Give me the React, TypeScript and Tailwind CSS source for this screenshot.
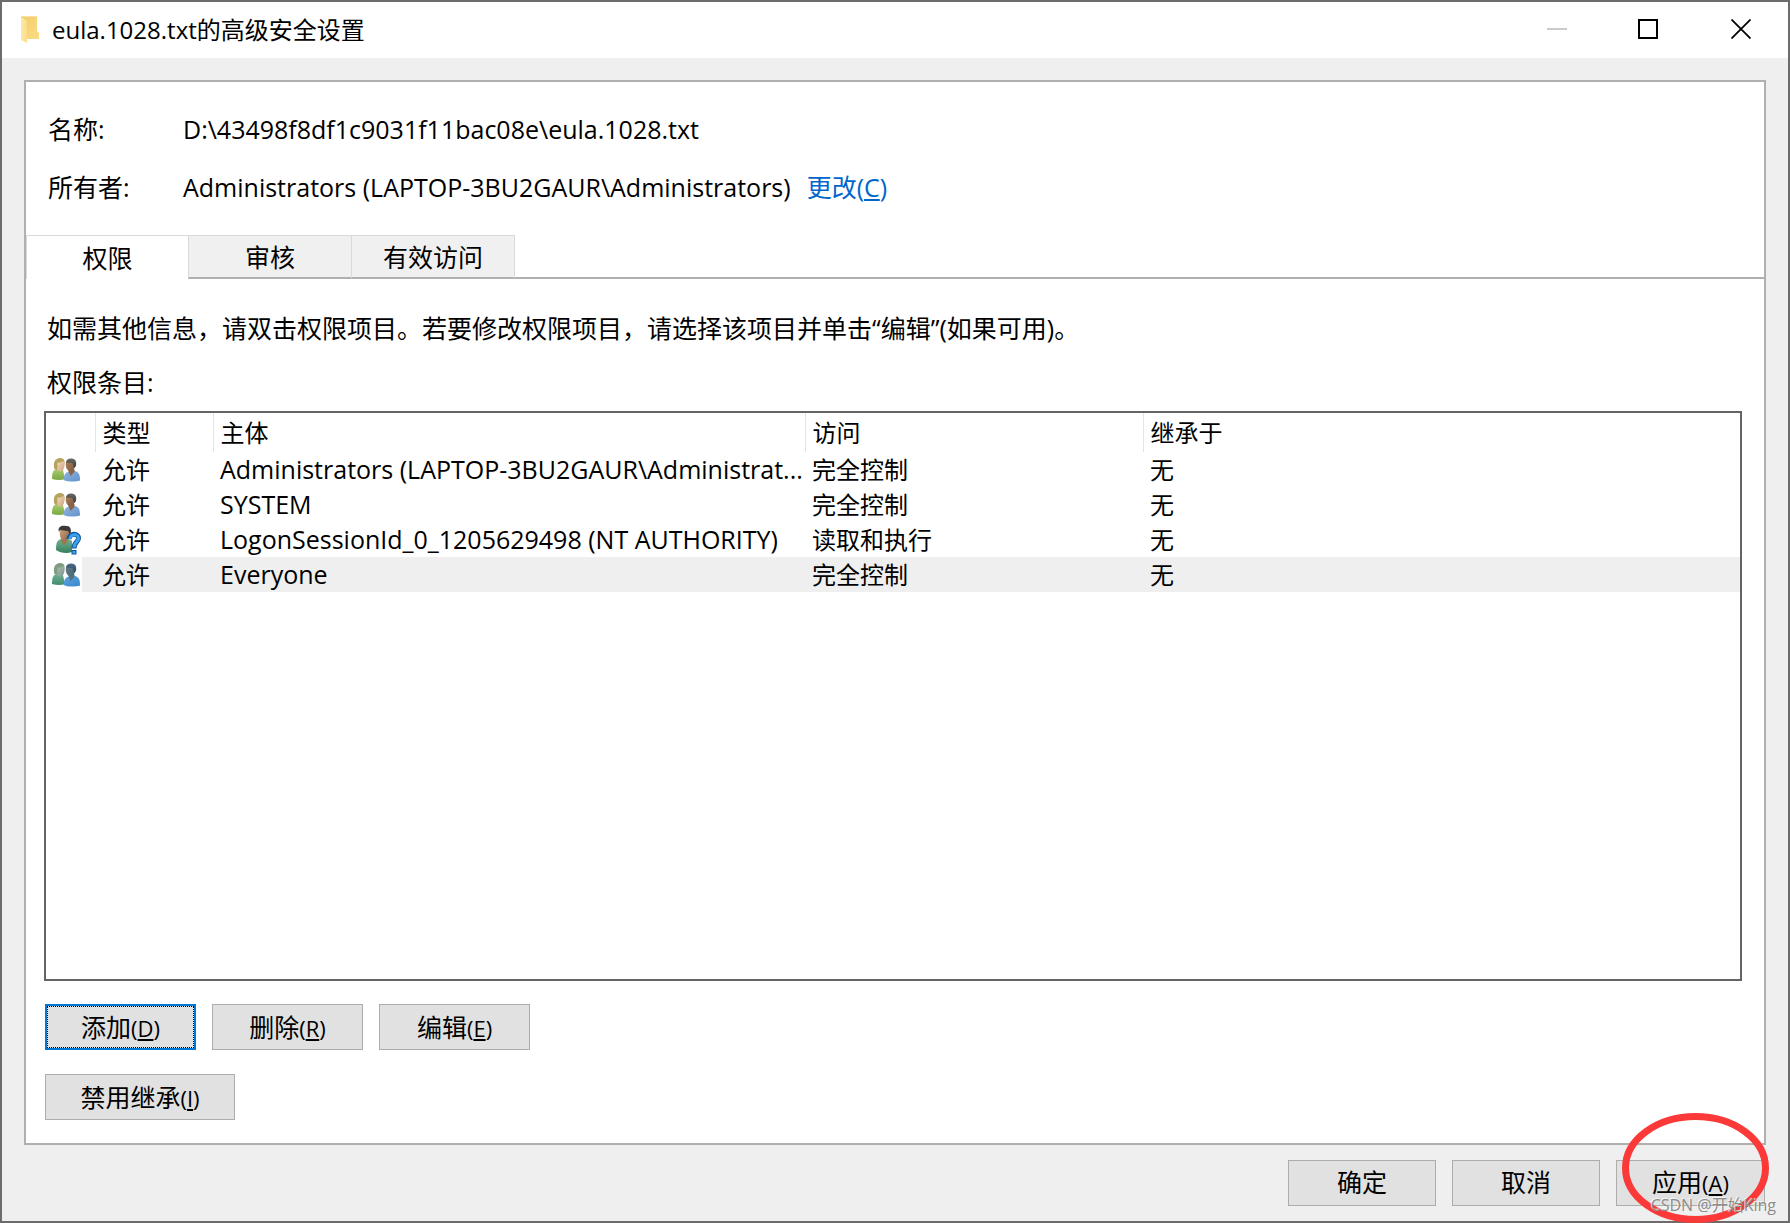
import { useState } from 'react';
import clsx from 'clsx';

type IconKind = 'group' | 'unknown' | 'selected';

const entries: { icon: IconKind; type: string; principal: string; access: string; inherited: string }[] = [
  { icon: 'group', type: '允许', principal: 'Administrators (LAPTOP-3BU2GAUR\\Administrat...', access: '完全控制', inherited: '无' },
  { icon: 'group', type: '允许', principal: 'SYSTEM', access: '完全控制', inherited: '无' },
  { icon: 'unknown', type: '允许', principal: 'LogonSessionId_0_1205629498 (NT AUTHORITY)', access: '读取和执行', inherited: '无' },
  { icon: 'selected', type: '允许', principal: 'Everyone', access: '完全控制', inherited: '无' },
];

const tabs = ['权限', '审核', '有效访问'];

function FolderIcon() {
  return (
    <svg width="19" height="28" viewBox="0 0 19 28" aria-hidden="true">
      <defs>
        <linearGradient id="folder-back" x1="0" y1="0" x2="1" y2="1">
          <stop offset="0" stopColor="#f0cd6c" />
          <stop offset="1" stopColor="#fbdc84" />
        </linearGradient>
        <linearGradient id="folder-front" x1="0" y1="0" x2="1" y2="0">
          <stop offset="0" stopColor="#fde9a9" />
          <stop offset="1" stopColor="#fbdd86" />
        </linearGradient>
      </defs>
      <path d="M0 0H16V15L18 17V23H5L0 20Z" fill="url(#folder-back)" />
      <path d="M0 1L5 4L6 6V27L0 24Z" fill="url(#folder-front)" />
      <path d="M0 0.500H16" stroke="#f9e4a2" />
    </svg>
  );
}

function GroupIcon({ selected = false }: { selected?: boolean }) {
  const id = selected ? 'sel' : 'grp';
  return (
    <svg width="28" height="24" viewBox="0 0 28 24" aria-hidden="true">
      <defs>
        <linearGradient id={`${id}-left`} x1="0" y1="0" x2="0" y2="1">
          <stop offset="0" stopColor={selected ? '#6fae90' : '#a9cb6e'} />
          <stop offset="1" stopColor={selected ? '#438c72' : '#7ba845'} />
        </linearGradient>
        <linearGradient id={`${id}-right`} x1="0" y1="0" x2="1" y2="1">
          <stop offset="0" stopColor={selected ? '#5aa3e0' : '#8db5e0'} />
          <stop offset="1" stopColor={selected ? '#3c86cd' : '#6493cb'} />
        </linearGradient>
        <linearGradient id={`${id}-face`} x1="0" y1="0" x2="1" y2="1">
          <stop offset="0" stopColor={selected ? '#a9b9a9' : '#f3d8ba'} />
          <stop offset="1" stopColor={selected ? '#7d9995' : '#cda280'} />
        </linearGradient>
        <linearGradient id={`${id}-face2`} x1="0" y1="0" x2="1" y2="1">
          <stop offset="0" stopColor={selected ? '#6b7c7f' : '#a98260'} />
          <stop offset="1" stopColor={selected ? '#45677d' : '#7d573e'} />
        </linearGradient>
        <linearGradient id={`${id}-hair`} x1="0" y1="0" x2="0" y2="1">
          <stop offset="0" stopColor={selected ? '#4c6b85' : '#6a6866'} />
          <stop offset="1" stopColor={selected ? '#2c4a66' : '#3c3a39'} />
        </linearGradient>
      </defs>
      {/* left person */}
      <path d="M0 21C0 15 1 12 4 11.500L11 12L13 21C9 22.500 4 22 0 21Z" fill={`url(#${id}-left)`} />
      <path d="M2 9C1.500 4 3 0.500 8 0C11.500 0 13 2 12.500 6L11 9L5 12C3 12 2 11 2 9Z" fill={selected ? '#7f9c80' : '#b7a45c'} />
      <path d="M5.500 4.500C8 5 10 4 11.500 3C13 6 13 10 10.500 12.500L8 14L5 11.500C6 9 5 7 5.500 4.500Z" fill={`url(#${id}-face)`} />
      {/* right person */}
      <path d="M11.500 22C12 17 13 14.500 17 13.500L23 13C27 14 28 17 28 22.500C23 24 16 24 11.500 22Z" fill={`url(#${id}-right)`} />
      <path d="M16 12L18 11H22.500V14L18.500 18Z" fill={selected ? '#52727f' : '#8e6446'} />
      <path d="M14 4C15 2 22 1 23 5C24 9 21 13 18.500 13C15 13 13 9 14 4Z" fill={`url(#${id}-face2)`} />
      <path d="M14 4.500C14 0 21 -0.500 23.500 2.500C25 5 24 9 22.500 10C21 8 21.500 6 20 5Z" fill={`url(#${id}-hair)`} />
    </svg>
  );
}

function UnknownIcon() {
  return (
    <svg width="30" height="30" viewBox="0 0 30 30" className="shrink-0" aria-hidden="true">
      <defs>
        <linearGradient id="unk-body" x1="0" y1="0" x2="0" y2="1">
          <stop offset="0" stopColor="#72b090" />
          <stop offset="1" stopColor="#37805f" />
        </linearGradient>
        <linearGradient id="unk-face" x1="0" y1="0" x2="1" y2="1">
          <stop offset="0" stopColor="#c9a585" />
          <stop offset="1" stopColor="#8f6242" />
        </linearGradient>
      </defs>
      <path d="M4 25C4 18 5 15 9 14H17L20 16V27C15 29 8 28 4 25Z" fill="url(#unk-body)" />
      <path d="M9 13H16L15 17L12 20L9 16Z" fill="#a37350" />
      <path d="M8 6C9 3 17 3 17 7C18 12 15 16 12 16C9 15 7 11 8 6Z" fill="url(#unk-face)" />
      <path d="M7 7C5 1 11 0 14 1C19 0 20 6 18 10L16 6C13 6 10 5 8 5Z" fill="#3b3a38" />
      <path d="M17 14C17.500 7.500 27 8 26.500 13.500C26 17.500 22 17 22 23.500" fill="none" stroke="#11569f" strokeWidth="5" />
      <path d="M18 14C18.500 8.500 26.500 8.500 26.500 13.500C26 17.500 22 17 22 22.500" fill="none" stroke="#39a2ea" strokeWidth="3" />
      <rect x="20" y="25.500" width="4" height="3.500" fill="#39a2ea" stroke="#11569f" />
    </svg>
  );
}

function EntryIcon({ kind }: { kind: IconKind }) {
  if (kind === 'unknown') return <UnknownIcon />;
  return <GroupIcon selected={kind === 'selected'} />;
}

function DialogButton({ label, hotkey, className }: { label: string; hotkey?: string; className?: string }) {
  return (
    <button
      type="button"
      className={clsx('h-[46px] border bg-[#e1e1e1] text-center text-[25px] whitespace-nowrap', className)}
    >
      {label}
      {hotkey && <span className="text-[22px]">(<u className="underline-offset-2">{hotkey}</u>)</span>}
    </button>
  );
}

function TitleBar() {
  return (
    <header className="flex h-14 shrink-0 items-center bg-white pl-[19px]">
      <FolderIcon />
      <h1 className="ml-3 flex-1 text-2xl">eula.1028.txt的高级安全设置</h1>
      <div className="flex h-full pb-0.5">
        <button type="button" aria-label="最小化" disabled className="flex w-[91px] items-center justify-center">
          <svg width="20" height="2"><rect width="20" height="2" fill="#cacaca" /></svg>
        </button>
        <button type="button" aria-label="最大化" className="flex w-[92px] items-center justify-center">
          <svg width="20" height="20"><rect x="1" y="1" width="18" height="18" fill="none" stroke="#000" strokeWidth="2" /></svg>
        </button>
        <button type="button" aria-label="关闭" className="flex w-[94px] items-center justify-center">
          <svg width="20" height="20"><path d="M0.500 0.500L19.500 19.500M19.500 0.500L0.500 19.500" stroke="#000" strokeWidth="1.800" /></svg>
        </button>
      </div>
    </header>
  );
}

function EntriesTable() {
  return (
    <div className="flex-1 border-2 border-[#646464] bg-white">
      <table className="w-full table-fixed text-left text-2xl">
        <colgroup>
          <col className="w-[49px]" />
          <col className="w-[118px]" />
          <col className="w-[592px]" />
          <col className="w-[338px]" />
          <col />
        </colgroup>
        <thead>
          <tr className="h-[39px]">
            <th className="border-r border-[#e3e3e3]" aria-label="图标" />
            <th className="border-r border-[#e3e3e3] pl-[7px] font-normal">类型</th>
            <th className="border-r border-[#e3e3e3] pl-[7px] font-normal">主体</th>
            <th className="border-r border-[#e3e3e3] pl-[7px] font-normal">访问</th>
            <th className="pl-[7px] font-normal">继承于</th>
          </tr>
        </thead>
        <tbody>
          {entries.map((entry) => (
            <tr key={entry.principal} className={clsx('h-[35px] leading-[35px]', entry.icon === 'selected' && 'bg-[#efefef]')}>
              <td className="p-0">
                <div className="flex h-[35px] w-9 items-center bg-white pl-1.5">
                  <EntryIcon kind={entry.icon} />
                </div>
              </td>
              <td className="pl-[7px]">{entry.type}</td>
              <td className="pl-[7px] text-[25px] whitespace-nowrap">{entry.principal}</td>
              <td className="pl-[7px]">{entry.access}</td>
              <td className="pl-[7px]">{entry.inherited}</td>
            </tr>
          ))}
        </tbody>
      </table>
    </div>
  );
}

export default function App() {
  const [activeTab, setActiveTab] = useState(tabs[0]);

  return (
    <main className="relative flex min-h-screen flex-col border-2 border-[#6c6c6c] bg-[#efefef] font-['Open_Sans','Noto_Sans_CJK_SC',sans-serif] font-normal text-black">
      <TitleBar />

      <section className="mx-[22px] mt-[22px] flex flex-1 flex-col border-2 border-[#b0b0b0] bg-white">
        <dl className="pt-[19px] pb-[18px] pl-[22px] text-[25px]">
          <div className="flex h-[58px] items-center">
            <dt className="w-[135px]">名称:</dt>
            <dd>D:\43498f8df1c9031f11bac08e\eula.1028.txt</dd>
          </div>
          <div className="flex h-[58px] items-center">
            <dt className="w-[135px]">所有者:</dt>
            <dd>Administrators (LAPTOP-3BU2GAUR\Administrators)</dd>
            <dd className="ml-4">
              <a href="#change" className="text-[#0066cc]">更改(<u className="underline-offset-2">C</u>)</a>
            </dd>
          </div>
        </dl>

        <div role="tablist" className="flex h-11 text-[25px]">
          {tabs.map((tab) => (
            <button
              key={tab}
              type="button"
              role="tab"
              aria-selected={tab === activeTab}
              onClick={() => setActiveTab(tab)}
              className={clsx(
                'w-[163px] border-t border-l border-t-[#d9d9d9] border-l-[#d9d9d9] pt-0.5 first:w-[162px]',
                tab === activeTab ? 'bg-white' : 'border-b-2 border-b-[#b0b0b0] bg-[#f0f0f0]',
              )}
            >
              {tab}
            </button>
          ))}
          <div className="flex-1 border-b-2 border-l border-b-[#b0b0b0] border-l-[#d9d9d9]" />
        </div>

        <div role="tabpanel" className="flex flex-1 flex-col pt-[31px] pr-[22px] pb-[23px] pl-[18px] text-[25px] leading-9">
          <p className="pl-[3px]">如需其他信息，请双击权限项目。若要修改权限项目，请选择该项目并单击“编辑”(如果可用)。</p>
          <p className="mt-[18px] mb-[11px] pl-[3px]">权限条目:</p>
          <EntriesTable />
          <div className="mt-[23px] flex gap-4 pl-px">
            <DialogButton
              label="添加"
              hotkey="D"
              className="w-[151px] border-[#0078d7] inset-ring inset-ring-[#0078d7] outline-1 -outline-offset-3 outline-black outline-dotted"
            />
            <DialogButton label="删除" hotkey="R" className="w-[151px] border-[#adadad]" />
            <DialogButton label="编辑" hotkey="E" className="w-[151px] border-[#adadad]" />
          </div>
          <div className="mt-6 flex pl-px">
            <DialogButton label="禁用继承" hotkey="I" className="w-[190px] border-[#adadad]" />
          </div>
        </div>
      </section>

      <footer className="flex justify-end gap-4 py-[15px] pr-[23px]">
        <DialogButton label="确定" className="w-[148px] border-[#adadad]" />
        <DialogButton label="取消" className="w-[148px] border-[#adadad]" />
        <div className="relative">
          <DialogButton label="应用" hotkey="A" className="w-[149px] border-[#adadad]" />
          <svg width="148" height="110" className="pointer-events-none absolute -top-[47px] left-1.5" aria-hidden="true">
            <ellipse cx="73.500" cy="55" rx="70" ry="51.500" fill="none" stroke="#fb3938" strokeWidth="7" />
          </svg>
        </div>
      </footer>

      <span className="pointer-events-none absolute right-3 bottom-1 text-base text-[#8c8c8c] [text-shadow:-1px_-1px_0_#ffffffb3]">
        CSDN @开始King
      </span>
    </main>
  );
}
